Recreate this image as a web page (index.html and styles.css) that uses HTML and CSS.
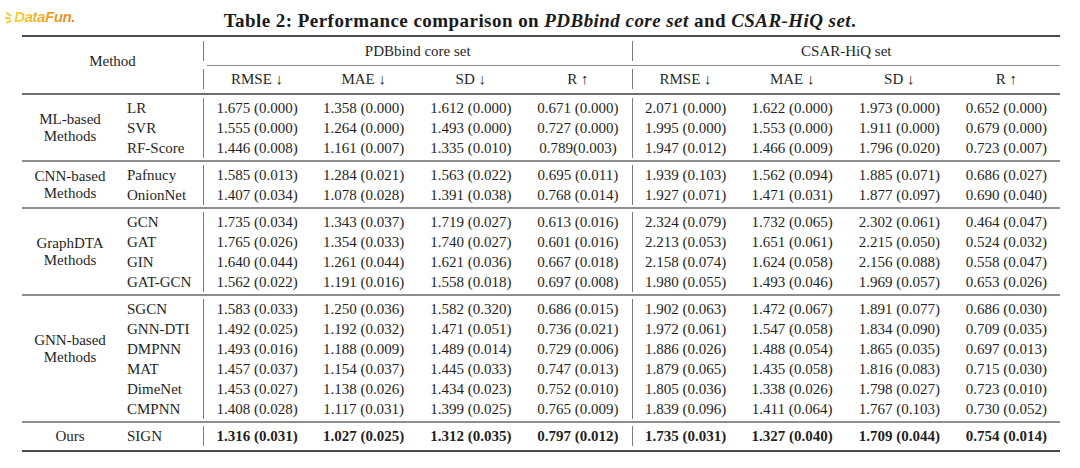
FILE: index.html
```html
<!DOCTYPE html>
<html lang="en">
<head>
<meta charset="utf-8">
<title>Table 2</title>
<link rel="stylesheet" href="styles.css">
</head>
<body>
<div class="page">
  <div class="logo">
    <svg class="logo-rays" width="9" height="16" viewBox="0 0 9 16"><path d="M2 4 L5.2 6.6 M1 9 L4.8 9.4 M2.2 13.6 L5.4 11.8" stroke="#f5c426" stroke-width="1.8" stroke-linecap="round" fill="none"/></svg>
    <span class="logo-text">DataFun.</span>
  </div>
  <h1 class="caption">Table 2: Performance comparison on <i>PDBbind core set</i> and <i>CSAR-HiQ set</i>.</h1>
  <div class="tbl">
    <div class="head">
      <div class="h-method">Method</div>
      <div class="h-cols">
        <div class="h-sets"><div class="h-set">PDBbind core set</div><div class="h-set">CSAR-HiQ set</div></div>
        <div class="cmid"></div>
        <div class="h-metrics">
          <div class="h-metric">RMSE ↓</div><div class="h-metric">MAE ↓</div><div class="h-metric">SD ↓</div><div class="h-metric">R ↑</div>
          <div class="h-metric">RMSE ↓</div><div class="h-metric">MAE ↓</div><div class="h-metric">SD ↓</div><div class="h-metric">R ↑</div>
        </div>
      </div>
    </div>

    <div class="section">
      <div class="group">ML-based<br>Methods</div>
      <div class="rows">
        <div class="name">LR</div><div>1.675 (0.000)</div><div>1.358 (0.000)</div><div>1.612 (0.000)</div><div>0.671 (0.000)</div><div>2.071 (0.000)</div><div>1.622 (0.000)</div><div>1.973 (0.000)</div><div>0.652 (0.000)</div>
        <div class="name">SVR</div><div>1.555 (0.000)</div><div>1.264 (0.000)</div><div>1.493 (0.000)</div><div>0.727 (0.000)</div><div>1.995 (0.000)</div><div>1.553 (0.000)</div><div>1.911 (0.000)</div><div>0.679 (0.000)</div>
        <div class="name">RF-Score</div><div>1.446 (0.008)</div><div>1.161 (0.007)</div><div>1.335 (0.010)</div><div>0.789(0.003)</div><div>1.947 (0.012)</div><div>1.466 (0.009)</div><div>1.796 (0.020)</div><div>0.723 (0.007)</div>
      </div>
    </div>

    <div class="section">
      <div class="group">CNN-based<br>Methods</div>
      <div class="rows">
        <div class="name">Pafnucy</div><div>1.585 (0.013)</div><div>1.284 (0.021)</div><div>1.563 (0.022)</div><div>0.695 (0.011)</div><div>1.939 (0.103)</div><div>1.562 (0.094)</div><div>1.885 (0.071)</div><div>0.686 (0.027)</div>
        <div class="name">OnionNet</div><div>1.407 (0.034)</div><div>1.078 (0.028)</div><div>1.391 (0.038)</div><div>0.768 (0.014)</div><div>1.927 (0.071)</div><div>1.471 (0.031)</div><div>1.877 (0.097)</div><div>0.690 (0.040)</div>
      </div>
    </div>

    <div class="section">
      <div class="group">GraphDTA<br>Methods</div>
      <div class="rows">
        <div class="name">GCN</div><div>1.735 (0.034)</div><div>1.343 (0.037)</div><div>1.719 (0.027)</div><div>0.613 (0.016)</div><div>2.324 (0.079)</div><div>1.732 (0.065)</div><div>2.302 (0.061)</div><div>0.464 (0.047)</div>
        <div class="name">GAT</div><div>1.765 (0.026)</div><div>1.354 (0.033)</div><div>1.740 (0.027)</div><div>0.601 (0.016)</div><div>2.213 (0.053)</div><div>1.651 (0.061)</div><div>2.215 (0.050)</div><div>0.524 (0.032)</div>
        <div class="name">GIN</div><div>1.640 (0.044)</div><div>1.261 (0.044)</div><div>1.621 (0.036)</div><div>0.667 (0.018)</div><div>2.158 (0.074)</div><div>1.624 (0.058)</div><div>2.156 (0.088)</div><div>0.558 (0.047)</div>
        <div class="name">GAT-GCN</div><div>1.562 (0.022)</div><div>1.191 (0.016)</div><div>1.558 (0.018)</div><div>0.697 (0.008)</div><div>1.980 (0.055)</div><div>1.493 (0.046)</div><div>1.969 (0.057)</div><div>0.653 (0.026)</div>
      </div>
    </div>

    <div class="section">
      <div class="group group-high">GNN-based<br>Methods</div>
      <div class="rows">
        <div class="name">SGCN</div><div>1.583 (0.033)</div><div>1.250 (0.036)</div><div>1.582 (0.320)</div><div>0.686 (0.015)</div><div>1.902 (0.063)</div><div>1.472 (0.067)</div><div>1.891 (0.077)</div><div>0.686 (0.030)</div>
        <div class="name">GNN-DTI</div><div>1.492 (0.025)</div><div>1.192 (0.032)</div><div>1.471 (0.051)</div><div>0.736 (0.021)</div><div>1.972 (0.061)</div><div>1.547 (0.058)</div><div>1.834 (0.090)</div><div>0.709 (0.035)</div>
        <div class="name">DMPNN</div><div>1.493 (0.016)</div><div>1.188 (0.009)</div><div>1.489 (0.014)</div><div>0.729 (0.006)</div><div>1.886 (0.026)</div><div>1.488 (0.054)</div><div>1.865 (0.035)</div><div>0.697 (0.013)</div>
        <div class="name">MAT</div><div>1.457 (0.037)</div><div>1.154 (0.037)</div><div>1.445 (0.033)</div><div>0.747 (0.013)</div><div>1.879 (0.065)</div><div>1.435 (0.058)</div><div>1.816 (0.083)</div><div>0.715 (0.030)</div>
        <div class="name">DimeNet</div><div>1.453 (0.027)</div><div>1.138 (0.026)</div><div>1.434 (0.023)</div><div>0.752 (0.010)</div><div>1.805 (0.036)</div><div>1.338 (0.026)</div><div>1.798 (0.027)</div><div>0.723 (0.010)</div>
        <div class="name">CMPNN</div><div>1.408 (0.028)</div><div>1.117 (0.031)</div><div>1.399 (0.025)</div><div>0.765 (0.009)</div><div>1.839 (0.096)</div><div>1.411 (0.064)</div><div>1.767 (0.103)</div><div>0.730 (0.052)</div>
      </div>
    </div>

    <div class="section section-last">
      <div class="group">Ours</div>
      <div class="rows rows-best">
        <div class="name">SIGN</div><div>1.316 (0.031)</div><div>1.027 (0.025)</div><div>1.312 (0.035)</div><div>0.797 (0.012)</div><div>1.735 (0.031)</div><div>1.327 (0.040)</div><div>1.709 (0.044)</div><div>0.754 (0.014)</div>
      </div>
    </div>
  </div>
</div>
</body>
</html>
```

FILE: styles.css
```css
html, body {
  margin: 0;
  padding: 0;
  background: #ffffff;
}

body {
  font-family: "Liberation Serif", "DejaVu Serif", serif;
  color: #1f1f1f;
}

.page {
  position: relative;
  width: 1080px;
  height: 468px;
  overflow: hidden;
}

/* watermark logo overlay */
.logo {
  position: absolute;
  left: 5px;
  top: 8px;
  display: flex;
  align-items: center;
}

.logo-rays {
  display: block;
}

.logo-text {
  font-family: "Liberation Sans", "DejaVu Sans", sans-serif;
  font-style: italic;
  font-weight: 700;
  font-size: 15px;
  line-height: 17px;
  letter-spacing: -0.4px;
  background: linear-gradient(90deg, #f6d22c 0%, #f4b324 35%, #f2951f 70%, #ef861d 100%);
  -webkit-background-clip: text;
  background-clip: text;
  color: transparent;
}

.caption {
  margin: 0;
  height: 35px;
  box-sizing: border-box;
  padding-top: 10px;
  line-height: 22px;
  font-size: 19px;
  letter-spacing: 0.45px;
  font-weight: 700;
  text-align: center;
  color: #1a1a1a;
}

.tbl {
  margin-left: 22px;
  width: 1038px;
  border-top: 2px solid #4a4a4a;
  border-bottom: 2px solid #4a4a4a;
  font-size: 15px;
}

.head {
  display: flex;
  height: 56px;
  border-bottom: 2px solid #707070;
}

.h-method {
  width: 181px;
  box-sizing: border-box;
  display: flex;
  align-items: center;
  justify-content: center;
  padding-bottom: 8px;
}

.h-cols {
  flex: 1;
}

.h-sets {
  display: grid;
  grid-template-columns: 1fr 1fr;
  padding: 4px 0;
}

.h-set,
.h-metric {
  height: 20px;
  line-height: 20px;
  text-align: center;
  white-space: nowrap;
}

.h-set {
  border-left: 1px solid #7a7a7a;
}

.cmid {
  margin-left: 4px;
  border-top: 1px solid #8a8a8a;
}

.h-metrics {
  display: grid;
  grid-template-columns: repeat(8, 1fr);
  padding: 3px 0 4px;
}

.h-metric:nth-child(4n+1) {
  border-left: 1px solid #7a7a7a;
}

.section {
  display: flex;
  padding: 3px 0 2px;
}

.section + .section {
  border-top: 2px solid #8e8e8e;
}

.section-last {
  padding-bottom: 4px;
}

.group {
  width: 96px;
  flex: none;
  display: flex;
  align-items: center;
  justify-content: center;
  text-align: center;
  line-height: 17px;
}

.group-high {
  padding-bottom: 21px;
  box-sizing: border-box;
}

.rows {
  flex: 1;
  display: grid;
  grid-template-columns: 85px repeat(8, 1fr);
  grid-auto-rows: 20px;
  line-height: 20px;
}

.rows > div {
  text-align: center;
  white-space: nowrap;
}

.rows > .name {
  text-align: left;
  padding-left: 9px;
}

.rows > div:nth-child(9n+2),
.rows > div:nth-child(9n+6) {
  border-left: 1px solid #7a7a7a;
}

.rows-best > div:not(.name) {
  font-weight: 700;
}
```
